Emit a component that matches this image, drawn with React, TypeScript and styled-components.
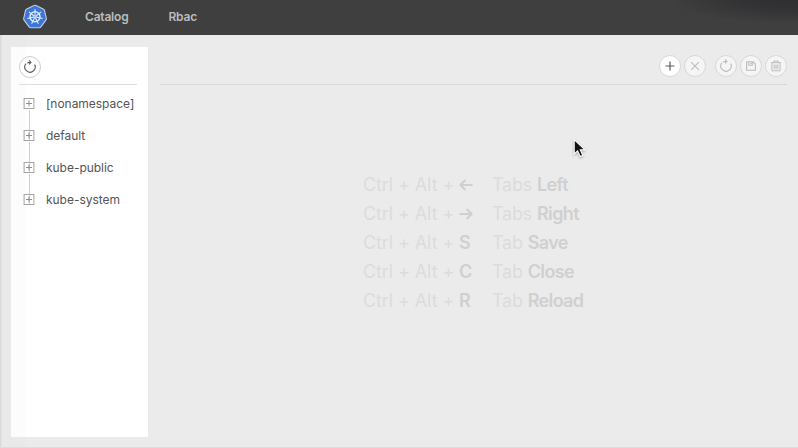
import React from "react";
import styled, { createGlobalStyle } from "styled-components";

const GlobalStyle = createGlobalStyle`
  * { box-sizing: border-box; }
  html, body { margin: 0; padding: 0; }
  body { font-family: Inter, "Liberation Sans", sans-serif; background: #ebebeb; overflow: hidden; }
`;

const Window = styled.div`
  width: 798px;
  height: 448px;
  display: flex;
  flex-direction: column;
  background: linear-gradient(90deg, #dadada 0, #dadada 1px, #e9e9e9 2px, #e9e9e9 25px, #ebebeb 28px);
  border-bottom: 1px solid #dedede;
  position: relative;
`;

const Header = styled.header`
  height: 35px;
  flex: none;
  display: flex;
  align-items: center;
  background:
    radial-gradient(ellipse 130px 24px at 100% 0, #2e2e30 0, #333335 45%, rgba(62, 62, 62, 0) 100%),
    #3f3f3f;
`;

const LogoIcon = styled.svg`
  width: 26px;
  height: 26px;
  margin: 0 0 1px 22px;
`;

const Nav = styled.nav`
  display: flex;
  gap: 40px;
  margin-left: 37px;
  padding-bottom: 1px;
`;

const NavItem = styled.a`
  font-size: 12px;
  line-height: 16px;
  font-weight: 600;
  letter-spacing: -0.2px;
  color: #bcbcbc;
`;

const Body = styled.div`
  flex: 1;
  display: flex;
  gap: 12px;
  padding: 12px 11px 10px;
`;

const Sidebar = styled.aside`
  width: 137px;
  padding: 0 11px 0 8px;
  background: linear-gradient(90deg, #fcfcfc 0, #fcfcfc 14px, #fff 15px);
`;

const SidebarTools = styled.div`
  height: 38px;
  display: flex;
  align-items: center;
  padding-top: 2px;
  border-bottom: 1px solid #dedede;
`;

const RoundButton = styled.button<{ $tone: "plain" | "active" | "faded"; $gap?: number }>`
  width: 22px;
  height: 22px;
  flex: none;
  padding: 0;
  margin-left: ${(p) => p.$gap ?? 0}px;
  border-radius: 50%;
  border: 1px solid ${(p) => (p.$tone === "plain" ? "#cecece" : "#d8d8d8")};
  background: ${(p) => (p.$tone === "faded" ? "#f5f5f5" : "#fff")};
  color: ${(p) => (p.$tone === "faded" ? "#bcbcbc" : "#5c5c5c")};
  display: flex;
  align-items: center;
  justify-content: center;
`;

const Tree = styled.ul`
  list-style: none;
  margin: 0;
  padding: 3px 0 0 4px;
`;

const TreeRow = styled.li`
  height: 32px;
  display: flex;
  align-items: center;
  gap: 11px;
`;

const TreeIcon = styled.svg`
  width: 12px;
  height: 32px;
  flex: none;
`;

const TreeLabel = styled.span`
  font-size: 12px;
  line-height: 18px;
  white-space: nowrap;
  letter-spacing: -0.03px;
  color: #555557;
`;

const Main = styled.main`
  width: 627px;
  display: flex;
  flex-direction: column;
`;

const Toolbar = styled.div`
  height: 38px;
  flex: none;
  display: flex;
  align-items: center;
  justify-content: flex-end;
  border-bottom: 1px solid #d8d8d8;
`;

const Shortcuts = styled.div`
  display: grid;
  grid-template-columns: 96px 33px auto;
  grid-auto-rows: 29px;
  align-items: center;
  margin: 85px 0 0 203px;
  font-size: 18px;
  line-height: 29px;
  color: #dcdcdc;
  white-space: nowrap;
`;

const Combo = styled.span`
  letter-spacing: -0.1px;
`;

const Key = styled.span`
  font-weight: 600;
  font-size: 18px;
  color: #d0d0d0;
  display: flex;
  align-items: center;
`;

const Action = styled.span`
  letter-spacing: -0.2px;
  b {
    font-weight: 600;
    color: #d0d0d0;
    letter-spacing: -0.65px;
  }
`;

const Cursor = styled.svg`
  position: absolute;
  left: 573px;
  top: 138px;
  width: 14px;
  height: 20px;
  filter: drop-shadow(0 1px 1px rgba(0, 0, 0, 0.3));
`;

const Refresh = () => (
  <svg width="14" height="14" viewBox="0 0 14 14" fill="none" stroke="currentColor" strokeWidth="1.1">
    <path d="M3 3.6A5.2 5.2 0 1 0 11.6 4.6M4.2 2.9Q5.6 2.2 7.8 2.4M6 .4L8 2.4L6.2 4.5" />
  </svg>
);

const Plus = () => (
  <svg width="10" height="10" viewBox="0 0 10 10" stroke="currentColor" strokeWidth="1.2">
    <path d="M.5 5H9.5M5 .5V9.5" />
  </svg>
);

const Close = () => (
  <svg width="10" height="10" viewBox="0 0 10 10" stroke="currentColor" strokeWidth="1.1">
    <path d="M1.2 1.2L8.8 8.8M8.8 1.2L1.2 8.8" />
  </svg>
);

const Save = () => (
  <svg width="10" height="10" viewBox="0 0 10 10" fill="none" stroke="currentColor" strokeWidth="1.1">
    <path d="M.6.8H7.2L9.4 3V9.2H.6ZM2.8 1V4.2H6.3V1M5 1.8V3" />
  </svg>
);

const Trash = () => (
  <svg width="12" height="12" viewBox="0 0 12 12" fill="none" stroke="currentColor" strokeWidth="1">
    <path d="M.8 2.7H11.2M3.8 2.5V1H8.2V2.5M1.9 3V10.8H10.1V3M4.2 4.5V9.3M6 4.5V9.3M7.8 4.5V9.3" />
  </svg>
);

const Arrow = ({ right }: { right?: boolean }) => (
  <svg width="14" height="12" viewBox="0 0 14 12" fill="none" stroke="currentColor" strokeWidth="2.1">
    <path
      d={right ? "M.4 6H12.4M7.6 1L12.6 6L7.6 11" : "M13.6 6H1.6M6.4 1L1.4 6L6.4 11"}
      strokeLinejoin="round"
    />
  </svg>
);

const SPOKES = [0, 1, 2, 3, 4, 5, 6].map((i) => (i * 360) / 7);

const KubernetesLogo = () => (
  <LogoIcon viewBox="0 0 26 26">
    <path
      d="M12 1.5Q13 1 14 1.5L21.2 4.9Q22.2 5.4 22.5 6.4L24.3 14.4Q24.5 15.4 23.9 16.2L18.9 22.8Q18.2 23.7 17.1 23.7H8.9Q7.8 23.7 7.1 22.8L2.1 16.2Q1.5 15.4 1.7 14.4L3.5 6.4Q3.8 5.4 4.8 4.9Z"
      fill="#3b76d8"
      stroke="#c5ccd6"
      strokeWidth="1.1"
    />
    <g stroke="#dce8f8" fill="none">
      <circle cx="13" cy="12.8" r="5" strokeWidth="1.5" />
      {SPOKES.map((a) => (
        <path key={a} d="M13 11.5V5" strokeWidth="1.1" transform={`rotate(${a} 13 12.8)`} />
      ))}
    </g>
    <circle cx="13" cy="12.8" r="1.6" fill="#dce8f8" />
    <circle cx="13" cy="12.8" r=".6" fill="#3b76d8" />
  </LogoIcon>
);

const NAMESPACES = ["[nonamespace]", "default", "kube-public", "kube-system"];

const SHORTCUTS: { key: React.ReactNode; noun: string; action: string }[] = [
  { key: <Arrow />, noun: "Tabs", action: "Left" },
  { key: <Arrow right />, noun: "Tabs", action: "Right" },
  { key: "S", noun: "Tab", action: "Save" },
  { key: "C", noun: "Tab", action: "Close" },
  { key: "R", noun: "Tab", action: "Reload" },
];

export default function App() {
  return (
    <>
      <GlobalStyle />
      <Window>
        <Header>
          <KubernetesLogo />
          <Nav>
            <NavItem>Catalog</NavItem>
            <NavItem>Rbac</NavItem>
          </Nav>
        </Header>
        <Body>
          <Sidebar>
            <SidebarTools>
              <RoundButton $tone="plain" aria-label="Refresh"><Refresh /></RoundButton>
            </SidebarTools>
            <Tree>
              {NAMESPACES.map((name, i) => (
                <TreeRow key={name}>
                  <TreeIcon viewBox="0 0 12 32" fill="none">
                    {i > 0 && <path d="M6.5 0V21" stroke="#d0d0d0" />}
                    {i < NAMESPACES.length - 1 && <path d="M6.5 22V32" stroke="#d0d0d0" />}
                    <rect x="1.1" y="10.5" width="9.8" height="10" stroke="#a4a4a4" />
                    <path d="M3 15.5H9M6 12.5V18.5" stroke="#909090" />
                  </TreeIcon>
                  <TreeLabel>{name}</TreeLabel>
                </TreeRow>
              ))}
            </Tree>
          </Sidebar>
          <Main>
            <Toolbar>
              <RoundButton $tone="active" aria-label="Add"><Plus /></RoundButton>
              <RoundButton $tone="faded" $gap={3} aria-label="Close"><Close /></RoundButton>
              <RoundButton $tone="faded" $gap={9} aria-label="Reload"><Refresh /></RoundButton>
              <RoundButton $tone="faded" $gap={3} aria-label="Save"><Save /></RoundButton>
              <RoundButton $tone="faded" $gap={3} aria-label="Delete"><Trash /></RoundButton>
            </Toolbar>
            <Shortcuts>
              {SHORTCUTS.map((s) => (
                <React.Fragment key={s.action}>
                  <Combo>Ctrl + Alt +</Combo>
                  <Key>{s.key}</Key>
                  <Action>{s.noun} <b>{s.action}</b></Action>
                </React.Fragment>
              ))}
            </Shortcuts>
          </Main>
        </Body>
        <Cursor viewBox="0 0 14 20">
          <path d="M1.2 1.5V16L4.6 12.9L7.2 18.6L9.8 17.4L7.3 11.9H12Z" fill="#111" stroke="#fff" strokeWidth="1.1" />
        </Cursor>
      </Window>
    </>
  );
}
